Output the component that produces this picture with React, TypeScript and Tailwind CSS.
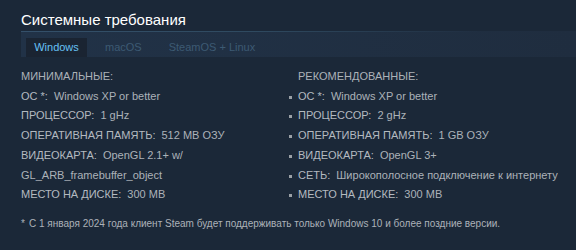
const minReqs = [
  { label: "ОС *:", value: "Windows XP or better" },
  { label: "ПРОЦЕССОР:", value: "1 gHz" },
  { label: "ОПЕРАТИВНАЯ ПАМЯТЬ:", value: "512 MB ОЗУ" },
  { label: "ВИДЕОКАРТА:", value: "OpenGL 2.1+ w/", more: "GL_ARB_framebuffer_object" },
  { label: "МЕСТО НА ДИСКЕ:", value: "300 MB" },
]

const recReqs = [
  { label: "ОС *:", value: "Windows XP or better" },
  { label: "ПРОЦЕССОР:", value: "2 gHz" },
  { label: "ОПЕРАТИВНАЯ ПАМЯТЬ:", value: "1 GB ОЗУ" },
  { label: "ВИДЕОКАРТА:", value: "OpenGL 3+" },
  { label: "СЕТЬ:", value: "Широкополосное подключение к интернету" },
  { label: "МЕСТО НА ДИСКЕ:", value: "300 MB" },
]

type Req = { label: string; value: string; more?: string }

const ReqList = ({ title, items, bullets }: { title: string; items: Req[]; bullets?: boolean }) => {
  return (
    <div className="flex-1">
      <div className="leading-[19.7px]">{title}</div>
      <ul className="leading-[19.7px]">
        {items.map((it) => (
          <li key={it.label} className="relative">
            {bullets && <span className="absolute -left-[9px] top-[9px] w-[3px] h-[3px] bg-[#9aa0a6]" />}
            <div className="flex gap-[6px]">
              <span className="text-[#b4bac0]">{it.label}</span>
              <span>{it.value}</span>
            </div>
            {it.more && <div>{it.more}</div>}
          </li>
        ))}
      </ul>
    </div>
  )
}

const App = () => {
  return (
    <div className="w-[576px] h-[250px] bg-[#1b2838] font-['Liberation_Sans',Arial,sans-serif] overflow-hidden">
      <div className="pl-[21px] pt-[11px]">
        <h2 className="text-[15px] text-white leading-[18px]">Системные требования</h2>
        {/* tabs */}
        <div className="mt-[2px] h-[26px] bg-gradient-to-r from-[#213247] to-[#1f2d3f] flex items-end pl-[5px] relative">
          <div className="absolute top-0 left-0 w-[460px] h-px bg-gradient-to-r from-[#34506a] via-[#2f4a60] to-transparent" />
          <div className="h-[19px] w-[61px] bg-[#1a2432] flex items-center justify-center text-[11px] text-[#67c1f5]">Windows</div>
          <div className="h-[19px] ml-[18px] flex items-center text-[11px] text-[#3d5a73]">macOS</div>
          <div className="h-[19px] ml-[27px] flex items-center text-[11px] text-[#3d5a73]">SteamOS + Linux</div>
        </div>
        {/* reqs */}
        <div className="flex pt-[10px] text-[11px] text-[#acb2b8]">
          <div className="w-[277px] pr-[20px]">
            <ReqList title="МИНИМАЛЬНЫЕ:" items={minReqs} />
          </div>
          <ReqList title="РЕКОМЕНДОВАННЫЕ:" items={recReqs} bullets />
        </div>
        <div className="mt-[11px] text-[10px] text-[#acb2b8] flex">
          <span className="w-[8px]">*</span>
          <span>С 1 января 2024 года клиент Steam будет поддерживать только Windows 10 и более поздние версии.</span>
        </div>
      </div>
    </div>
  )
}

export default App
